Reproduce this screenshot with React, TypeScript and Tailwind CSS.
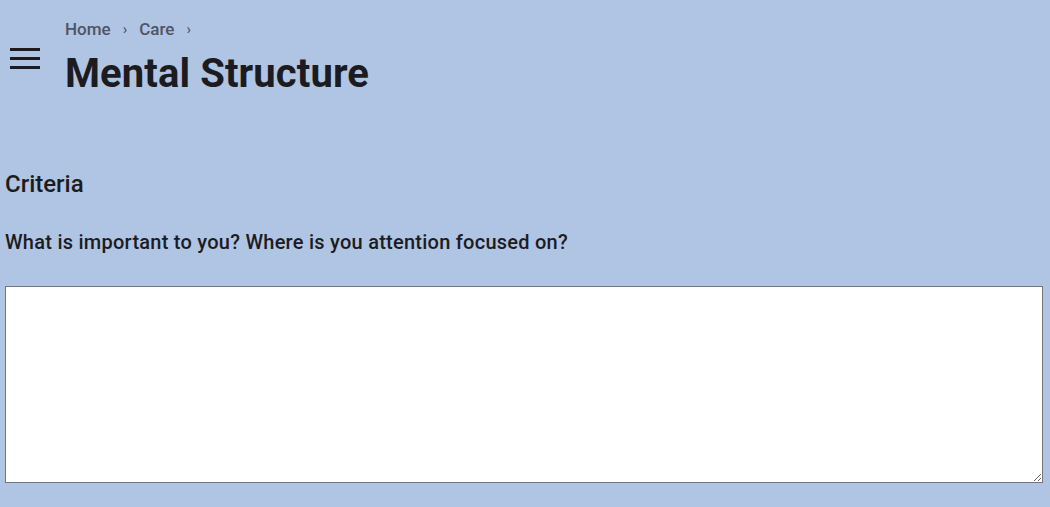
export default function App() {
  return (
    <div className="min-h-[507px] w-full bg-[#b0c4e4] font-['Roboto',sans-serif] text-[#1c1c20]">
      <header className="flex items-start pt-[16px]">
        <button aria-label="Menu" className="mt-[32px] ml-[10px] mr-[25px] flex w-[30px] flex-col gap-[6px]">
          <span className="block h-[3px] w-full bg-[#1c1c20]" />
          <span className="block h-[3px] w-full bg-[#1c1c20]" />
          <span className="block h-[3px] w-full bg-[#1c1c20]" />
        </button>
        <div>
          <nav className="flex items-center gap-[12px] text-[17px] leading-[26px] font-medium text-[#4e5563]">
            <span>Home</span>
            <span className="text-[15px]">›</span>
            <span>Care</span>
            <span className="text-[15px]">›</span>
          </nav>
          <h1 className="mt-[8px] text-[40px] leading-[48px] font-bold tracking-[0.1px]">Mental Structure</h1>
        </div>
      </header>
      <main className="px-[5px] pt-[70px]">
        <h2 className="text-[24px] leading-[32px] font-medium">Criteria</h2>
        <p className="mt-[28px] text-[20px] leading-[28px] font-medium tracking-[0.25px]">
          What is important to you? Where is you attention focused on?
        </p>
        <textarea className="mt-[30px] block h-[197px] w-[1038px] border border-[#767676] bg-white" />
      </main>
    </div>
  );
}
